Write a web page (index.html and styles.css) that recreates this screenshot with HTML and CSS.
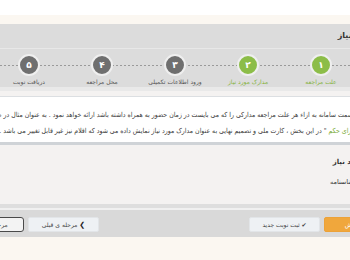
FILE: index.html
```html
<!DOCTYPE html>
<html lang="fa" dir="rtl">
<head>
    <meta charset="UTF-8">
    <meta name="viewport" content="width=device-width, initial-scale=1.0">
    <title>ثبت نوبت</title>
    <link rel="stylesheet" href="styles.css">
</head>
<body>
    <div class="topbar"></div>

    <div class="page">
        <div class="panel">
            <div class="panel-title">مدارک مورد نیاز</div>

            <div class="steps">
                <div class="step done">
                    <span class="circle">۱</span>
                    <span class="label">علت مراجعه</span>
                </div>
                <div class="step done">
                    <span class="circle">۲</span>
                    <span class="label">مدارک مورد نیاز</span>
                </div>
                <div class="step">
                    <span class="circle">۳</span>
                    <span class="label">ورود اطلاعات تکمیلی</span>
                </div>
                <div class="step">
                    <span class="circle">۴</span>
                    <span class="label">محل مراجعه</span>
                </div>
                <div class="step">
                    <span class="circle">۵</span>
                    <span class="label">دریافت نوبت</span>
                </div>
            </div>
        </div>

        <div class="content">
            <div class="info">
                <p>در این قسمت سامانه به ازاء هر علت مراجعه مدارکی را که می بایست در زمان حضور به همراه داشته باشد ارائه خواهد نمود . به عنوان مثال در صورت انتخاب</p>
                <p>" <span class="hl">کارت برای حکم</span> " در این بخش ، کارت ملی و تصمیم نهایی به عنوان مدارک مورد نیاز نمایش داده می شود که اقلام نیز غیر قابل تغییر می باشد .</p>
            </div>

            <div class="needs">
                <div class="needs-title">مدارک مورد نیاز</div>
                <div class="needs-item">اصل شناسنامه</div>
            </div>
        </div>

        <div class="footer">
            <div class="btn-group">
                <button class="btn btn-orange">پیش نمایش</button>
                <button class="btn btn-light">✔ ثبت نوبت جدید</button>
            </div>
            <div class="btn-group">
                <button class="btn btn-light"><b class="chev">❯</b> مرحله ی قبلی</button>
                <button class="btn btn-dark">مرحله ی بعدی</button>
            </div>
        </div>
    </div>
</body>
</html>
```

FILE: styles.css
```css
html, body {
    overflow: hidden;
}
body {
    margin: 0;
    background-color: #fbf7f1;
    font-family: 'DejaVu Sans', sans-serif;
    color: #444;
    direction: rtl;
}
.topbar {
    height: 15px;
    margin-bottom: 9px;
    background-color: #fff;
}
.page {
    width: 470px;
    margin-right: -60px;
}
.panel {
    background-color: #dcdcdc;
    border-bottom: 4px solid #e9e9e9;
}
.panel-title {
    height: 24px;
    line-height: 24px;
    padding-right: 9px;
    font-size: 8px;
    font-weight: bold;
    color: #333;
    border-bottom: 1px solid #e8e8e8;
}
.steps {
    display: flex;
    justify-content: center;
    padding-top: 5px;
    background: repeating-linear-gradient(to right, #9a9a9a 0 2px, transparent 2px 4px) 0 16px / 100% 1px no-repeat;
}
.step {
    width: 73px;
    display: flex;
    flex-direction: column;
    align-items: center;
}
.circle {
    width: 18px;
    height: 18px;
    border: 2px solid #efefef;
    border-radius: 50%;
    background-color: #6f6f6f;
    color: #fff;
    font-size: 9px;
    font-weight: bold;
    line-height: 18px;
    text-align: center;
}
.label {
    margin-top: 1px;
    line-height: 10px;
    font-size: 6px;
    color: #555;
    white-space: nowrap;
}
.step.done .circle {
    background-color: #8cbd48;
}
.step.done .label {
    color: #86b342;
}
.content {
    background-color: #f4f2f1;
    padding: 5px 7px 15px;
    border-bottom: 4px solid #dedede;
}
.info {
    background-color: #fff;
    border: 1px solid #dcdfe2;
    border-bottom: 3px solid #cfd3d7;
    padding: 10px 28px 3px 0;
}
.info p {
    margin: 0;
    line-height: 16px;
    font-family: 'DejaVu Sans Condensed', 'DejaVu Sans', sans-serif;
    font-size: 6.9px;
    color: #3a3a3a;
    white-space: nowrap;
}
.hl {
    color: #7aab35;
}
.needs {
    padding-right: 15px;
    margin-top: 10px;
}
.needs-title {
    line-height: 14px;
    font-size: 7px;
    font-weight: bold;
    color: #333;
}
.needs-item {
    margin-top: 6px;
    padding-right: 18px;
    line-height: 14px;
    font-size: 6.5px;
    color: #333;
}
.footer {
    display: flex;
    justify-content: space-between;
    padding: 7px 15px 5px;
    background-color: #d9d9d9;
    border-top: 2px solid #f0f0f0;
}
.btn-group {
    display: flex;
    gap: 4px;
}
.btn {
    height: 15px;
    padding: 0;
    font-family: 'DejaVu Sans', sans-serif;
    font-size: 6px;
    border-radius: 2px;
    cursor: pointer;
}
.btn-light {
    width: 71px;
    background-color: #eef1f4;
    border: 1px solid #e2e5e8;
    color: #444;
}
.btn-dark {
    width: 69px;
    background-color: #f3f3f3;
    border: 1px solid #4a4a4a;
    border-radius: 3px;
    color: #444;
}
.btn-orange {
    width: 71px;
    background-color: #f0a73c;
    border: 1px solid #eca238;
    color: #fff;
}
.chev {
    font-size: 7px;
    color: #222;
}
```
